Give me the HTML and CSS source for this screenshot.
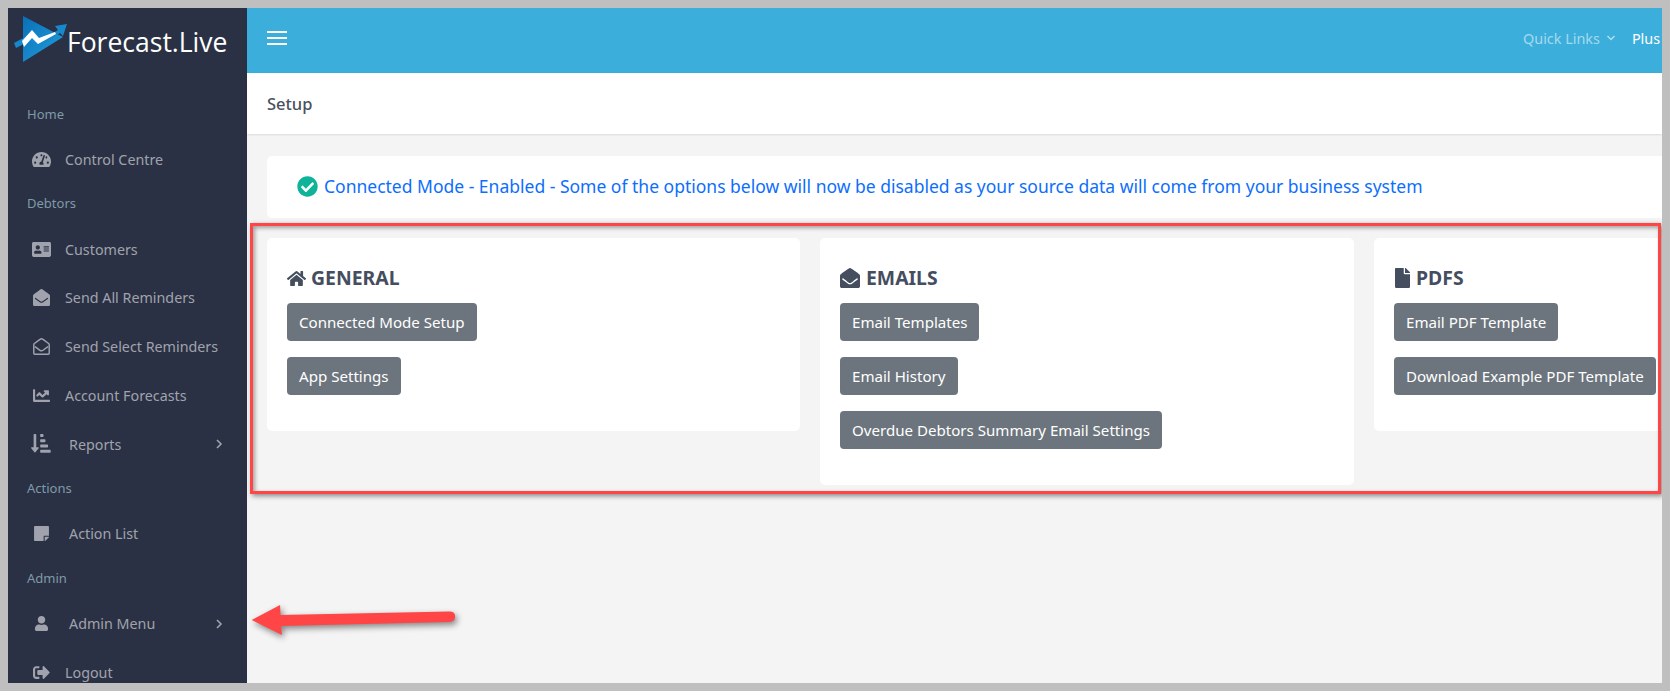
FILE: index.html
```html
<!DOCTYPE html>
<html lang="en">
<head>
<meta charset="utf-8">
<title>Setup - Forecast.Live</title>
<link rel="stylesheet" href="styles.css">
</head>
<body>
<div class="frame">
  <aside class="sidebar">
    <div class="logo">
      <svg class="logo-mark" viewBox="0 0 54 46">
        <defs>
          <linearGradient id="lg" x1="0" y1="0" x2="1" y2="1"><stop offset="0" stop-color="#0a6fb8"/><stop offset="1" stop-color="#23a0dc"/></linearGradient>
        </defs>
        <path d="M10 0 50 21 10 46Z" fill="url(#lg)"/>
        <path d="M1 27 16 19 25 26 45 14 42 10 54 8 50 20 47 17 25 31 17 25 3 32Z" fill="#1688cc"/>
        <path d="M9 25 19 14 26 22 42 16 43 18 25 28 19 22 11 31Z" fill="#fff"/>
      </svg>
      <span class="logo-text">Forecast.Live</span>
    </div>
    <div class="nav-label">Home</div>
    <a class="nav-item"><svg class="nav-icon" viewBox="0 0 576 512"><path d="M288 32C128.94 32 0 160.94 0 320c0 52.8 14.25 102.26 39.06 144.8 5.61 9.62 16.3 15.2 27.44 15.2h443c11.14 0 21.83-5.58 27.44-15.2C561.75 422.26 576 372.8 576 320c0-159.06-128.94-288-288-288zm0 64c14.71 0 26.58 10.13 30.32 23.65-1.11 2.26-2.64 4.23-3.45 6.67l-9.22 27.67c-5.13 3.49-10.97 6.01-17.64 6.01-17.67 0-32-14.33-32-32S270.33 96 288 96zM96 384c-17.67 0-32-14.33-32-32s14.33-32 32-32 32 14.33 32 32-14.33 32-32 32zm48-160c-17.67 0-32-14.33-32-32s14.33-32 32-32 32 14.33 32 32-14.33 32-32 32zm246.77-72.41l-61.33 184C343.13 347.33 352 364.54 352 384c0 11.72-3.38 22.55-8.88 32H232.88c-5.5-9.45-8.88-20.28-8.88-32 0-33.94 26.5-61.43 59.9-63.59l61.34-184.01c4.17-12.56 17.73-19.45 30.36-15.17 12.57 4.19 19.35 17.79 15.17 30.36zm14.66 57.2l15.52-46.55c3.47-1.29 7.13-2.23 11.05-2.23 17.67 0 32 14.33 32 32s-14.33 32-32 32c-11.38-.01-20.89-6.28-26.57-15.22zM480 384c-17.67 0-32-14.33-32-32s14.33-32 32-32 32 14.33 32 32-14.33 32-32 32z"/></svg><span>Control Centre</span></a>
    <div class="nav-label">Debtors</div>
    <a class="nav-item"><svg class="nav-icon" viewBox="0 0 576 512"><path d="M528 32H48C21.5 32 0 53.5 0 80v352c0 26.5 21.5 48 48 48h480c26.5 0 48-21.5 48-48V80c0-26.5-21.5-48-48-48zm-352 96c35.3 0 64 28.7 64 64s-28.7 64-64 64-64-28.7-64-64 28.7-64 64-64zm112 236.8c0 10.6-10 19.2-22.4 19.2H86.4C74 384 64 375.4 64 364.8v-19.2c0-31.8 30.1-57.6 67.2-57.6h5c12.3 5.1 25.7 8 39.8 8s27.6-2.9 39.8-8h5c37.1 0 67.2 25.8 67.2 57.6v19.2zM512 312c0 4.4-3.6 8-8 8H360c-4.4 0-8-3.6-8-8v-16c0-4.4 3.6-8 8-8h144c4.4 0 8 3.6 8 8v16zm0-64c0 4.4-3.6 8-8 8H360c-4.4 0-8-3.6-8-8v-16c0-4.4 3.6-8 8-8h144c4.4 0 8 3.6 8 8v16zm0-64c0 4.4-3.6 8-8 8H360c-4.4 0-8-3.6-8-8v-16c0-4.4 3.6-8 8-8h144c4.4 0 8 3.6 8 8v16z"/></svg><span>Customers</span></a>
    <a class="nav-item"><svg class="nav-icon" viewBox="0 0 512 512"><path d="M512 464c0 26.51-21.49 48-48 48H48c-26.51 0-48-21.49-48-48V200.724a48 48 0 0 1 18.387-37.776c24.913-19.529 45.501-35.365 164.2-121.511C199.412 29.17 232.797-.347 256 .003c23.198-.354 56.596 29.172 73.413 41.433 118.687 86.137 139.303 101.995 164.2 121.512A48 48 0 0 1 512 200.724V464zm-65.666-196.605c-2.563-3.728-7.7-4.595-11.339-1.907-22.845 16.873-55.462 40.705-105.582 77.079-16.825 12.266-50.21 41.781-73.413 41.43-23.211.344-56.559-29.143-73.413-41.43-50.114-36.37-82.734-60.204-105.582-77.079-3.639-2.688-8.776-1.821-11.339 1.907l-9.072 13.196a7.998 7.998 0 0 0 1.839 10.967c22.887 16.899 55.454 40.69 105.303 76.868 20.274 14.781 56.524 47.813 92.264 47.573 35.724.242 71.961-32.771 92.263-47.573 49.85-36.179 82.418-59.97 105.303-76.868a7.998 7.998 0 0 0 1.839-10.967l-9.071-13.196z"/></svg><span>Send All Reminders</span></a>
    <a class="nav-item"><svg class="nav-icon" viewBox="0 0 512 512"><path class="icon-line" d="M24 200 Q24 180 42 166 L210 44 Q256 8 302 44 L470 166 Q488 180 488 200 V460 Q488 488 460 488 H52 Q24 488 24 460Z M60 262 L210 370 Q256 404 302 370 L452 262"/></svg><span>Send Select Reminders</span></a>
    <a class="nav-item"><svg class="nav-icon" viewBox="0 0 512 512"><path d="M496 384H64V80c0-8.84-7.16-16-16-16H16C7.16 64 0 71.16 0 80v336c0 17.67 14.33 32 32 32h464c8.84 0 16-7.16 16-16v-32c0-8.84-7.16-16-16-16zM464 96H345.94c-21.38 0-32.09 25.85-16.97 40.97l32.4 32.4L288 242.75l-73.37-73.37c-12.5-12.5-32.76-12.5-45.25 0l-68.69 68.69c-6.25 6.25-6.25 16.38 0 22.63l22.62 22.62c6.25 6.25 16.38 6.25 22.63 0L192 237.25l73.37 73.37c12.5 12.5 32.76 12.5 45.25 0l96-96 32.4 32.4c15.12 15.12 40.97 4.41 40.97-16.97V112c.01-8.84-7.16-16-16-16z"/></svg><span>Account Forecasts</span></a>
    <a class="nav-item nav-wide"><svg class="nav-icon icon-tall" viewBox="0 0 512 512"><path d="M176 352h-48V48a16 16 0 0 0-16-16H80a16 16 0 0 0-16 16v304H16c-14.19 0-21.36 17.24-11.29 27.31l80 96a16 16 0 0 0 22.62 0l80-96C197.35 369.26 190.22 352 176 352zM240 32h48a16 16 0 0 1 16 16v40a16 16 0 0 1-16 16h-48a16 16 0 0 1-16-16V48a16 16 0 0 1 16-16zm0 128h96a16 16 0 0 1 16 16v40a16 16 0 0 1-16 16h-96a16 16 0 0 1-16-16v-40a16 16 0 0 1 16-16zm0 128h160a16 16 0 0 1 16 16v40a16 16 0 0 1-16 16H240a16 16 0 0 1-16-16v-40a16 16 0 0 1 16-16zm0 128h224a16 16 0 0 1 16 16v40a16 16 0 0 1-16 16H240a16 16 0 0 1-16-16v-40a16 16 0 0 1 16-16z" transform="translate(0 -32)"/></svg><span>Reports</span><svg class="nav-chevron" viewBox="0 0 8 12"><path d="M2 2l4 4-4 4"/></svg></a>
    <div class="nav-label">Actions</div>
    <a class="nav-item nav-wide"><svg class="nav-icon" viewBox="0 0 512 512"><path transform="translate(32 0)" d="M312 320h136V56c0-13.3-10.7-24-24-24H24C10.7 32 0 42.7 0 56v400c0 13.3 10.7 24 24 24h264V344c0-13.2 10.8-24 24-24zm129 55l-98 98c-4.5 4.500-10.6 7-17 7h-6V352h128v6.1c0 6.3-2.5 12.4-7 16.9z"/></svg><span>Action List</span></a>
    <div class="nav-label">Admin</div>
    <a class="nav-item nav-wide"><svg class="nav-icon icon-small" viewBox="0 0 448 512"><path d="M224 256c70.7 0 128-57.3 128-128S294.7 0 224 0 96 57.3 96 128s57.3 128 128 128zm89.6 32h-16.7c-22.2 10.2-46.9 16-72.9 16s-50.6-5.8-72.9-16h-16.7C60.2 288 0 348.2 0 422.4V464c0 26.5 21.5 48 48 48h352c26.5 0 48-21.5 48-48v-41.6c0-74.2-60.2-134.4-134.4-134.4z"/></svg><span>Admin Menu</span><svg class="nav-chevron" viewBox="0 0 8 12"><path d="M2 2l4 4-4 4"/></svg></a>
    <a class="nav-item"><svg class="nav-icon" viewBox="0 0 512 512"><path d="M497 273L329 441c-15 15-41 4.5-41-17v-96H152c-13.3 0-24-10.7-24-24v-96c0-13.3 10.7-24 24-24h136V88c0-21.4 25.9-32 41-17l168 168c9.3 9.4 9.3 24.6 0 34zM192 436v-40c0-6.6-5.4-12-12-12H96c-17.7 0-32-14.3-32-32V160c0-17.7 14.3-32 32-32h84c6.6 0 12-5.4 12-12V76c0-6.6-5.4-12-12-12H96c-53 0-96 43-96 96v192c0 53 43 96 96 96h84c6.6 0 12-5.4 12-12z"/></svg><span>Logout</span></a>
  </aside>
  <main class="main">
    <header class="topbar">
      <div class="burger"><i></i><i></i><i></i></div>
      <div class="top-links">
        <span class="quick">Quick Links</span>
        <svg class="quick-chevron" viewBox="0 0 10 6"><path d="M1.5 1l3.5 3.5L8.500 1"/></svg>
        <span class="plus">Plus</span>
      </div>
    </header>
    <div class="crumb">Setup</div>
    <div class="content">
      <div class="notice">
        <svg class="notice-icon" viewBox="0 0 512 512"><path d="M504 256c0 136.967-111.033 248-248 248S8 392.967 8 256 119.033 8 256 8s248 111.033 248 248zM227.314 387.314l184-184c6.248-6.248 6.248-16.379 0-22.627l-22.627-22.627c-6.248-6.249-16.379-6.249-22.628 0L216 308.118l-70.059-70.059c-6.248-6.248-16.379-6.248-22.628 0l-22.627 22.627c-6.248 6.248-6.248 16.379 0 22.627l104 104c6.249 6.249 16.379 6.249 22.628.001z"/></svg>
        <span>Connected Mode - Enabled - Some of the options below will now be disabled as your source data will come from your business system</span>
      </div>
      <div class="cards">
        <section class="card">
          <h2 class="card-title"><svg class="title-icon home" viewBox="0 0 576 512"><path d="M280.37 148.26L96 300.11V464a16 16 0 0 0 16 16l112.06-.29a16 16 0 0 0 15.92-16V368a16 16 0 0 1 16-16h64a16 16 0 0 1 16 16v95.64a16 16 0 0 0 16 16.05L464 480a16 16 0 0 0 16-16V300L295.67 148.26a12.19 12.19 0 0 0-15.3 0zM571.6 251.47L488 182.56V44.05a12 12 0 0 0-12-12h-56a12 12 0 0 0-12 12v72.61L318.47 43a48 48 0 0 0-61 0L4.34 251.47a12 12 0 0 0-1.6 16.9l25.5 31A12 12 0 0 0 45.15 301l235.22-193.74a12.19 12.19 0 0 1 15.3 0L530.9 301a12 12 0 0 0 16.9-1.6l25.5-31a12 12 0 0 0-1.7-16.93z"/></svg>GENERAL</h2>
          <a class="btn">Connected Mode Setup</a>
          <a class="btn">App Settings</a>
        </section>
        <section class="card">
          <h2 class="card-title"><svg class="title-icon" viewBox="0 0 512 512"><path d="M512 464c0 26.51-21.49 48-48 48H48c-26.51 0-48-21.49-48-48V200.724a48 48 0 0 1 18.387-37.776c24.913-19.529 45.501-35.365 164.2-121.511C199.412 29.17 232.797-.347 256 .003c23.198-.354 56.596 29.172 73.413 41.433 118.687 86.137 139.303 101.995 164.2 121.512A48 48 0 0 1 512 200.724V464zm-65.666-196.605c-2.563-3.728-7.7-4.595-11.339-1.907-22.845 16.873-55.462 40.705-105.582 77.079-16.825 12.266-50.21 41.781-73.413 41.43-23.211.344-56.559-29.143-73.413-41.43-50.114-36.37-82.734-60.204-105.582-77.079-3.639-2.688-8.776-1.821-11.339 1.907l-9.072 13.196a7.998 7.998 0 0 0 1.839 10.967c22.887 16.899 55.454 40.69 105.303 76.868 20.274 14.781 56.524 47.813 92.264 47.573 35.724.242 71.961-32.771 92.263-47.573 49.85-36.179 82.418-59.97 105.303-76.868a7.998 7.998 0 0 0 1.839-10.967l-9.071-13.196z"/></svg>EMAILS</h2>
          <a class="btn">Email Templates</a>
          <a class="btn">Email History</a>
          <a class="btn">Overdue Debtors Summary Email Settings</a>
        </section>
        <section class="card">
          <h2 class="card-title"><svg class="title-icon file" viewBox="0 0 384 512"><path d="M224 136V0H24C10.7 0 0 10.7 0 24v464c0 13.3 10.7 24 24 24h336c13.3 0 24-10.7 24-24V160H248c-13.2 0-24-10.8-24-24zm160-14.1v6.1H256V0h6.1c6.4 0 12.5 2.5 17 7l97.9 98c4.5 4.5 7 10.6 7 16.9z"/></svg>PDFS</h2>
          <a class="btn">Email PDF Template</a>
          <a class="btn">Download Example PDF Template</a>
        </section>
      </div>
    </div>
  </main>
  <div class="highlight"></div>
  <svg class="arrow" viewBox="0 0 224 52" preserveAspectRatio="none"><path d="M6 24 36 9 36.500 19 215 15.500Q221 15.500 221 20.500 221 25.500 215 26L37 30 38 39Z"/></svg>
</div>
</body>
</html>
```

FILE: styles.css
```css
* { box-sizing: border-box; }
html, body { margin: 0; height: 100%; }
body {
  background: #bfbfbf;
  padding: 8px;
  overflow: hidden;
  font-family: "Noto Sans", "Open Sans", sans-serif;
}
.frame {
  position: relative;
  display: flex;
  width: 1654px;
  height: 675px;
  overflow: hidden;
  background: #f4f4f4;
}
.sidebar {
  flex: 0 0 239px;
  background: #2b3144;
  color: #a0a3ad;
  font-size: 14.3px;
}
.logo {
  display: flex;
  align-items: flex-start;
  height: 86px;
  padding: 8px 0 0 5px;
}
.logo-mark { width: 54px; height: 46px; flex: none; }
.logo-text {
  margin: 10px 0 0 0;
  font-family: "Open Sans", sans-serif;
  font-size: 26.500px;
  line-height: 32px;
  color: #fff;
}
.nav-label {
  display: flex;
  align-items: center;
  height: 41px;
  padding: 0 0 2px 19px;
  font-size: 13px;
  color: #7f9aa8;
}
.nav-item {
  display: flex;
  align-items: center;
  height: 48.75px;
  padding-left: 24px;
}
.nav-icon { width: 19px; height: 17px; flex: none; fill: #a0a3ad; margin-right: 14px; }
.nav-wide .nav-icon { margin-right: 18px; }
.nav-icon.icon-tall { height: 21px; width: 21px; margin-left: -1px; margin-right: 17px; }
.nav-icon.icon-small { height: 15px; width: 15px; margin-left: 2px; margin-right: 20px; }
.icon-line { fill: none; stroke: #a0a3ad; stroke-width: 44; }
.nav-chevron {
  width: 8px;
  height: 12px;
  margin-left: auto;
  margin-right: 24px;
  fill: none;
  stroke: #a0a3ad;
  stroke-width: 1.6;
}
.main { flex: 1; min-width: 0; display: flex; flex-direction: column; }
.topbar {
  flex: none;
  height: 65px;
  background: #3baedb;
  display: flex;
  align-items: center;
  padding: 0 0 5px 20px;
}
.burger { display: flex; flex-direction: column; gap: 4px; width: 20px; }
.burger i { display: block; height: 2px; background: #fff; }
.top-links {
  margin-left: auto;
  display: flex;
  align-items: center;
  width: 139px;
  font-size: 14.4px;
  overflow: hidden;
  white-space: nowrap;
  flex: none;
}
.quick { color: rgba(255, 255, 255, 0.55); }
.quick-chevron {
  width: 10px;
  height: 6px;
  margin: 0 16px 0 6px;
  flex: none;
  fill: none;
  stroke: rgba(255, 255, 255, 0.6);
  stroke-width: 1.5;
}
.plus { color: #fff; }
.crumb {
  flex: none;
  height: 61px;
  background: #fff;
  display: flex;
  align-items: center;
  padding-left: 20px;
  font-size: 16.5px;
  font-weight: 500;
  color: #4a5160;
  box-shadow: 0 1px 2px rgba(0, 0, 0, 0.1);
}
.content { padding: 22px 0 0 20px; min-width: 0; }
.notice {
  display: flex;
  align-items: center;
  height: 62px;
  padding: 0 0 2px 30px;
  background: #fff;
  border-radius: 5px 0 0 5px;
  color: #0d6efd;
  font-size: 17.5px;
  white-space: nowrap;
}
.notice-icon { width: 21px; height: 21px; flex: none; fill: #0fb39a; margin-right: 6px; }
.cards {
  display: grid;
  grid-template-columns: 533px 534px 533px;
  gap: 20px;
  align-items: start;
  margin-top: 20px;
}
.card {
  display: flex;
  flex-direction: column;
  align-items: flex-start;
  gap: 16px;
  padding: 30px 20px 36px;
  background: #fff;
  border-radius: 5px;
}
.card-title {
  display: flex;
  align-items: center;
  height: 20px;
  margin: 0 0 -1px;
  font-size: 19.4px;
  font-weight: 700;
  color: #454e5f;
  line-height: 20px;
}
.title-icon { width: 20px; height: 20px; flex: none; fill: #454e5f; margin-right: 6px; }
.title-icon.home { width: 19px; height: 17px; margin-right: 5px; }
.title-icon.file { width: 17px; height: 20px; margin-right: 5px; }
.btn {
  display: inline-flex;
  align-items: center;
  height: 38px;
  padding: 0 12px;
  background: #6c757d;
  border-radius: 4px;
  color: #fff;
  font-size: 15.1px;
  white-space: nowrap;
}
.highlight {
  position: absolute;
  left: 242px;
  top: 215px;
  width: 1411px;
  height: 271px;
  border: 3px solid #ff4545;
  box-shadow: 2px 2px 5px rgba(0, 0, 0, 0.45), inset 2px 2px 4px rgba(0, 0, 0, 0.35);
  pointer-events: none;
}
.arrow {
  position: absolute;
  left: 238px;
  top: 588px;
  width: 212px;
  height: 52px;
  fill: #ff4545;
  filter: drop-shadow(2px 3px 3px rgba(0, 0, 0, 0.45));
}
```
